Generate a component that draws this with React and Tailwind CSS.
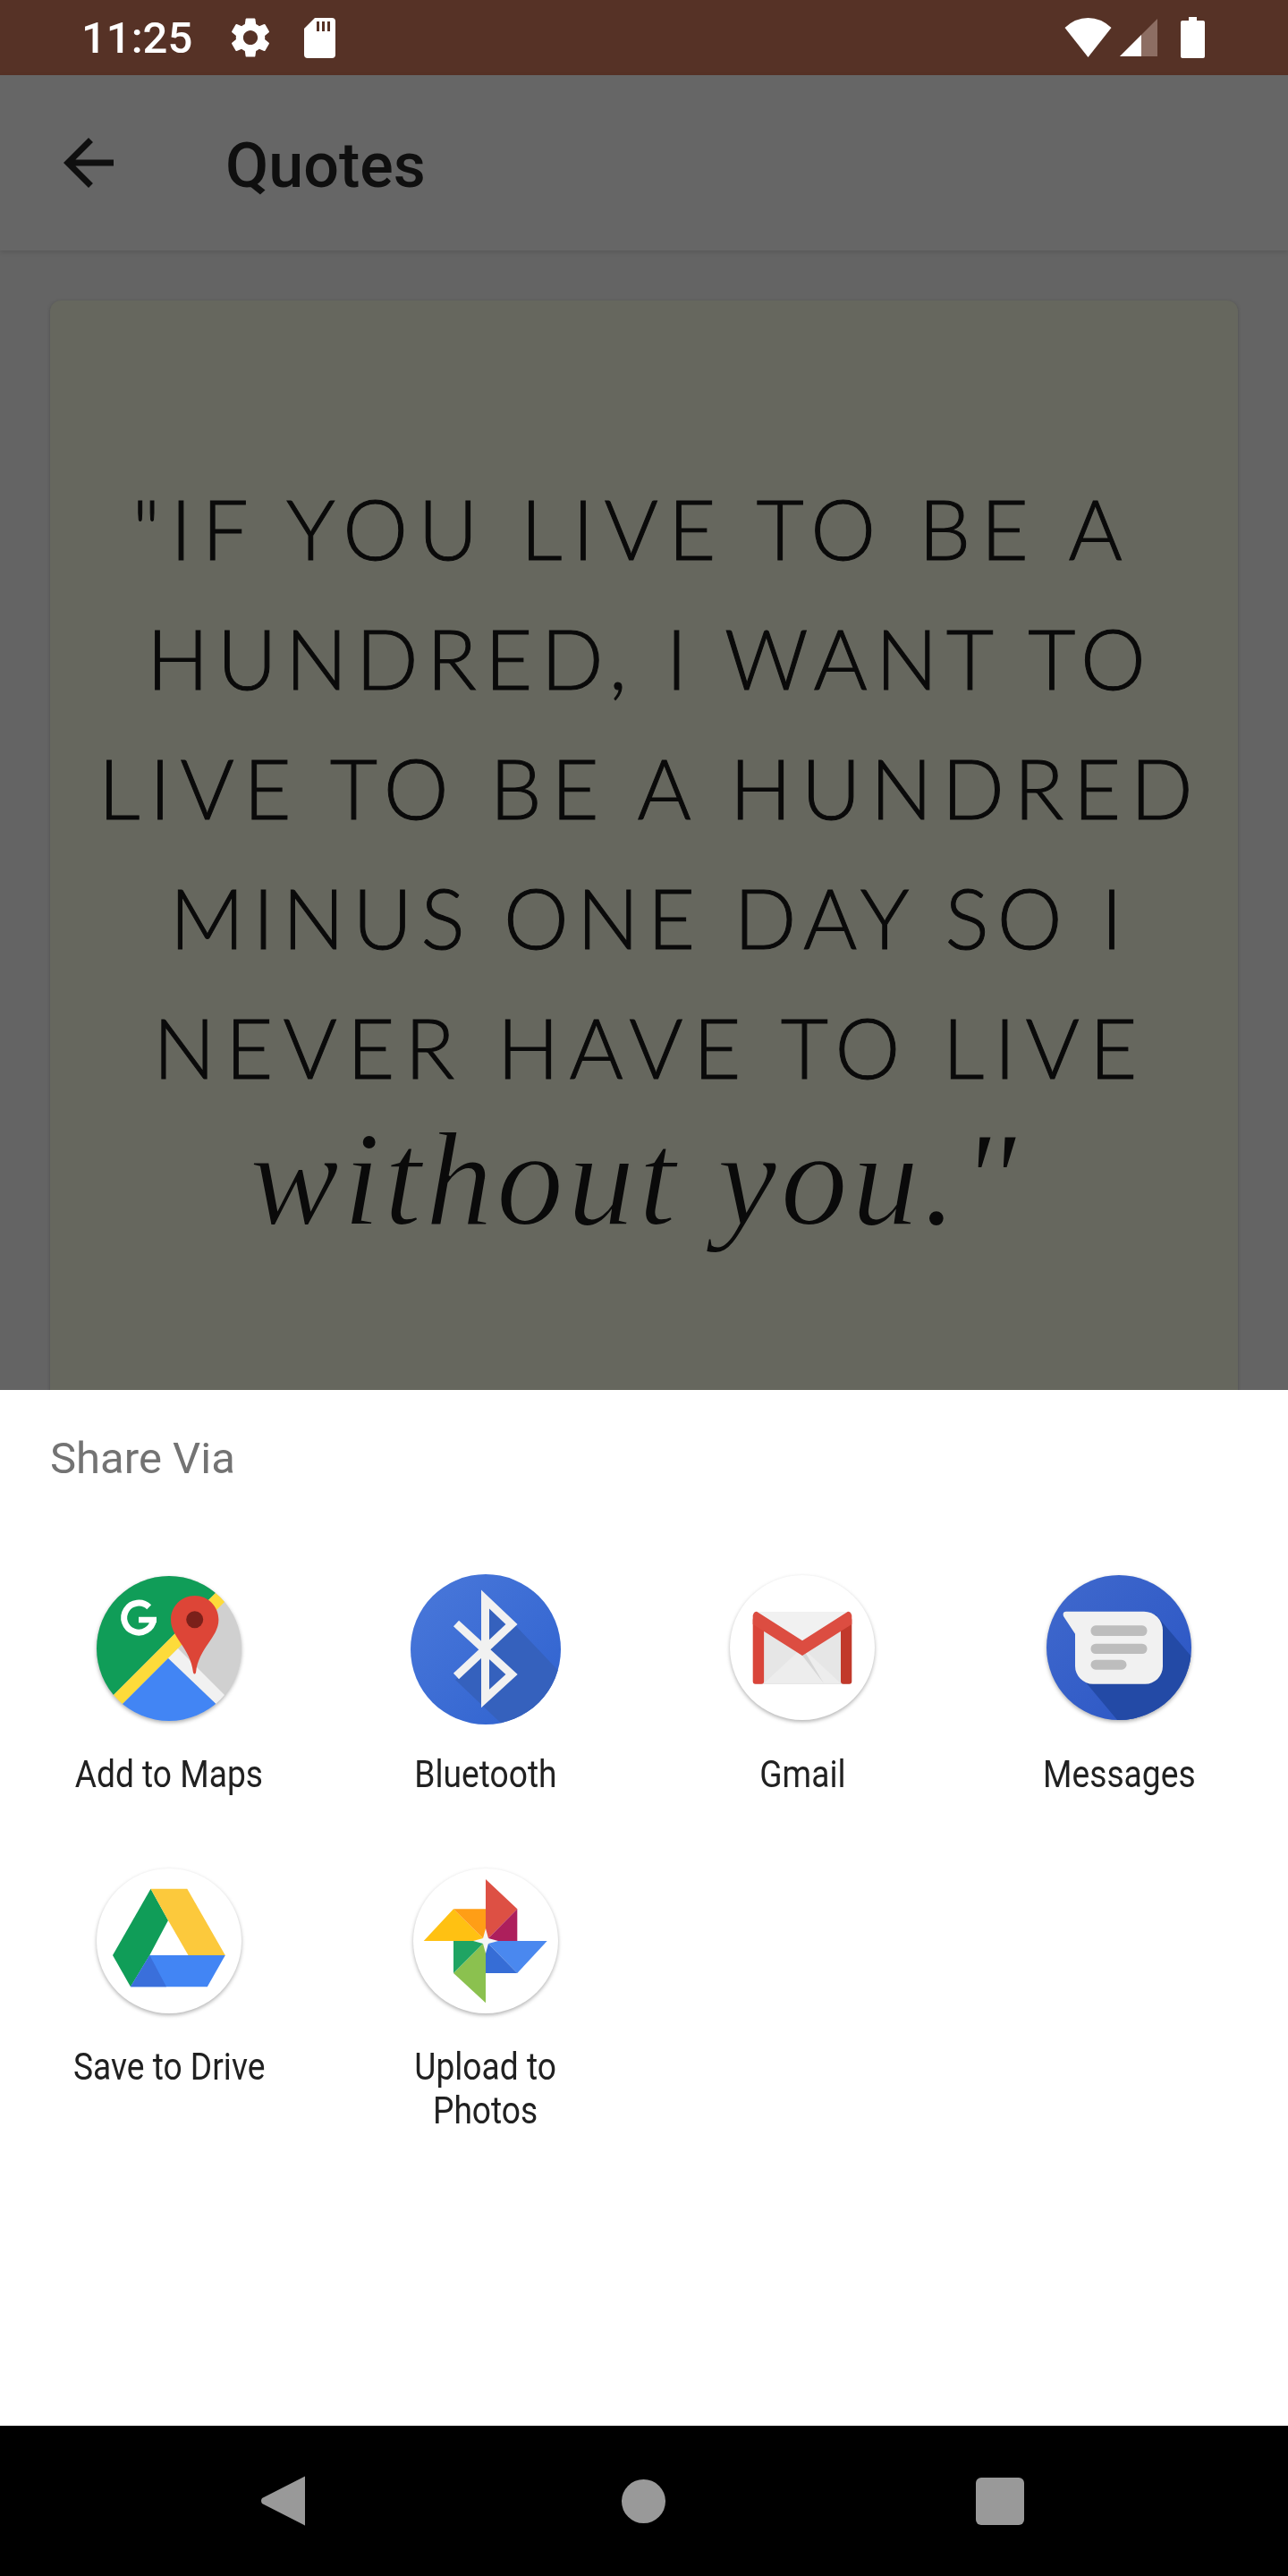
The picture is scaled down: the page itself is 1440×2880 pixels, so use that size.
import React from "react";

const QUOTE_LINES = [
    { text: "\"IF YOU LIVE TO BE A", className: "tracking-[11.4px] -ml-[40px]" },
    { text: "HUNDRED, I WANT TO", className: "tracking-[9.3px]" },
    { text: "LIVE TO BE A HUNDRED", className: "tracking-[10.5px]" },
    { text: "MINUS ONE DAY SO I", className: "tracking-[9.2px]" },
    { text: "NEVER HAVE TO LIVE", className: "tracking-[11.2px]" },
];

const MapsIcon = () => (
    <svg viewBox="0 0 168 168" className="w-[168px] h-[168px] drop-shadow-[0_2px_2px_rgba(0,0,0,0.3)]">
        <defs>
            <clipPath id="maps-clip"><circle cx="84" cy="83" r="81" /></clipPath>
        </defs>
        <g clipPath="url(#maps-clip)">
            <rect width="168" height="168" fill="#d0d0d0" />
            <polygon points="0,0 157,0 0,157" fill="#109d58" />
            <polygon points="157,0 177,0 0,177 0,157" fill="#fddb3a" />
            <polygon points="83,94 94,83 188,177 170,177" fill="#f1f1f1" />
            <polygon points="83,94 0,177 170,177" fill="#4285f4" />
        </g>
        <path d="M61.7 36.8A16.5 16.5 0 1 0 66.5 51" fill="none" stroke="#fff" strokeWidth="7" />
        <path d="M50 51H70" fill="none" stroke="#fff" strokeWidth="6.5" />
        <path d="M112.7 24C98 24 86 36 86 50.7C86 71 108 82 111 110Q112.5 113 114 110C117 82 139.4 71 139.4 50.7C139.4 36 127.4 24 112.7 24Z" fill="#dd4537" />
        <circle cx="112.7" cy="50.7" r="9.5" fill="#7b201a" />
    </svg>
);

const BluetoothIcon = () => (
    <svg viewBox="0 0 168 168" className="w-[168px] h-[168px]">
        <defs>
            <linearGradient id="bt-bg" x1="0" y1="0" x2="1" y2="1">
                <stop offset="0" stopColor="#4a78da" />
                <stop offset="1" stopColor="#2f62cf" />
            </linearGradient>
            <clipPath id="bt-clip"><circle cx="84" cy="84" r="84" /></clipPath>
        </defs>
        <circle cx="84" cy="84" r="84" fill="url(#bt-bg)" />
        <g clipPath="url(#bt-clip)" fill="#3561bd">
            <polygon points="116,56 175,118 175,175 110,175 50,118 84,88" />
            <polygon points="88,38 106,56 88,74" />
        </g>
        <path d="M51 55L113 112L83.5 139V28L113 56L51 114" fill="none" stroke="#f1f1f1" strokeWidth="9" />
    </svg>
);

const GmailIcon = () => (
    <svg viewBox="0 0 168 168" className="w-[168px] h-[168px] drop-shadow-[0_2px_2px_rgba(0,0,0,0.3)]">
        <circle cx="84" cy="82" r="81" fill="#fff" />
        <rect x="29" y="42" width="110" height="81" rx="3" fill="#e6e6e6" />
        <polygon points="33,42 135,42 84,80" fill="#f1f1f1" />
        <polygon points="41,122 84,82 127,122" fill="#ededed" />
        <polygon points="41,60 84,91 108,122 84,82 41,60" fill="#d6d6d6" />
        <rect x="28.7" y="48" width="12.4" height="74.7" rx="3" fill="#d9453a" />
        <rect x="127" y="48" width="12.3" height="74.7" rx="3" fill="#c1392b" />
        <path d="M28.7 46Q30 41.7 33 41.7L84 74.3L135 41.7Q138 41.7 139.3 46V56L84 91L28.7 56Z" fill="#dc4d41" />
    </svg>
);

const MessagesIcon = () => (
    <svg viewBox="0 0 168 168" className="w-[168px] h-[168px] drop-shadow-[0_2px_2px_rgba(0,0,0,0.3)]">
        <defs>
            <linearGradient id="msg-bg" x1="0" y1="0" x2="1" y2="1">
                <stop offset="0" stopColor="#4069cd" />
                <stop offset="1" stopColor="#2a55c4" />
            </linearGradient>
            <clipPath id="msg-clip"><circle cx="84" cy="82" r="81" /></clipPath>
        </defs>
        <circle cx="84" cy="82" r="81" fill="url(#msg-bg)" />
        <polygon clipPath="url(#msg-clip)" points="125,45 170,98 170,170 88,170 42,115" fill="#234aa6" />
        <path d="M25 41.7H112A21 21 0 0 1 133 62.7V103A19.7 19.7 0 0 1 113.3 122.7H55A20 20 0 0 1 35 102.7V66.7L22 47Q20.5 41.7 25 41.7Z" fill="#f1f1f1" />
        <rect x="52.5" y="57.3" width="63" height="11.7" rx="5.5" fill="#bdbdbd" />
        <rect x="52.5" y="77.7" width="63" height="11.3" rx="5.5" fill="#bdbdbd" />
        <rect x="52.5" y="95.7" width="40" height="11" rx="5.5" fill="#bdbdbd" />
    </svg>
);

const DriveIcon = () => (
    <svg viewBox="0 0 168 168" className="w-[168px] h-[168px] drop-shadow-[0_2px_2px_rgba(0,0,0,0.3)]">
        <circle cx="84" cy="83" r="81" fill="#fff" />
        <polygon points="63.5,24.7 21,99 41,134.3 62.3,99 83,60" fill="#109d58" />
        <polygon points="63.5,24.7 104.3,24.7 146.8,99 105.5,99 83,60" fill="#fcc93c" />
        <polygon points="62.3,99 146.8,99 126.8,134.3 41,134.3" fill="#4285f4" />
        <polygon points="62.3,99 81,134.3 41,134.3" fill="#3a6fdb" />
    </svg>
);

const PhotosIcon = () => (
    <svg viewBox="0 0 168 168" className="w-[168px] h-[168px] drop-shadow-[0_2px_2px_rgba(0,0,0,0.3)]">
        <circle cx="84" cy="83" r="81" fill="#fff" />
        <polygon points="84,14 119.3,47.3 84,83" fill="#dd5044" />
        <polygon points="119.3,47.3 119.3,83 84,83" fill="#ad1f5c" />
        <polygon points="84,83 152.7,83 119.3,119" fill="#4a88ef" />
        <polygon points="84,83 119.3,119 84,119" fill="#366dd6" />
        <polygon points="84,152.3 48,119 84,83" fill="#8bc14f" />
        <polygon points="48,83 84,83 48,119" fill="#1fa463" />
        <polygon points="14.7,83 48,47.3 84,83" fill="#ffc112" />
        <polygon points="48,47.3 84,47.3 84,83" fill="#ff9e16" />
        <polygon points="84,69 87,80 98,83 87,86 84,97 81,86 70,83 81,80" fill="#f5f5f5" />
    </svg>
);

const APPS = [
    { label: ["Add to Maps"], Icon: MapsIcon },
    { label: ["Bluetooth"], Icon: BluetoothIcon },
    { label: ["Gmail"], Icon: GmailIcon },
    { label: ["Messages"], Icon: MessagesIcon },
    { label: ["Save to Drive"], Icon: DriveIcon },
    { label: ["Upload to", "Photos"], Icon: PhotosIcon },
];

const StatusBar = () => (
    <div className="flex items-center h-[84px] pl-[91px] pr-[93px] bg-[#563226] text-white">
        <span className="text-[49px] font-medium leading-none">11:25</span>
        <svg viewBox="0 0 24 24" fill="#fff" className="w-[54px] h-[54px] ml-[38px]">
            <path d="M19.14 12.94c.04-.3.06-.61.06-.94 0-.32-.02-.64-.07-.94l2.03-1.58c.18-.14.23-.41.12-.61l-1.92-3.32c-.12-.22-.37-.29-.59-.22l-2.39.96c-.5-.38-1.03-.7-1.62-.94l-.36-2.54c-.04-.24-.24-.41-.48-.41h-3.84c-.24 0-.43.17-.47.41l-.36 2.54c-.59.24-1.13.57-1.62.94l-2.39-.96c-.22-.08-.47 0-.59.22L2.74 8.87c-.12.21-.08.47.12.61l2.03 1.58c-.05.3-.09.63-.09.94s.02.64.07.94l-2.03 1.58c-.18.14-.23.41-.12.61l1.92 3.32c.12.22.37.29.59.22l2.39-.96c.5.38 1.03.7 1.62.94l.36 2.54c.05.24.24.41.48.41h3.84c.24 0 .44-.17.47-.41l.36-2.54c.59-.24 1.13-.56 1.62-.94l2.39.96c.22.08.47 0 .59-.22l1.92-3.32c.12-.22.07-.47-.12-.61l-2.01-1.58zM12 15.6c-1.98 0-3.6-1.62-3.6-3.6s1.62-3.6 3.6-3.6 3.6 1.62 3.6 3.6-1.62 3.6-3.6 3.6z" />
        </svg>
        <svg viewBox="0 0 35 45" className="w-[35px] h-[45px] ml-[33px]">
            <path d="M12 0H31Q35 0 35 4V41Q35 45 31 45H4Q0 45 0 41V12Z" fill="#fff" />
            <path d="M14 4h3v11h-3zM20 4h3v11h-3zM26 4h3v11h-3z" fill="#563226" />
        </svg>
        <div className="flex items-center ml-auto">
            <svg viewBox="0 0 53 44" className="w-[53px] h-[44px]">
                <path d="M26.5 44L0.5 11Q12 0 26.5 0T52.5 11Z" fill="#fff" />
            </svg>
            <svg viewBox="0 0 42 42" className="w-[42px] h-[42px] ml-[9px]">
                <path d="M42 0V42H0Z" fill="#8d6e63" />
                <path d="M24 18V42H0Z" fill="#fff" />
            </svg>
            <svg viewBox="0 0 27 46" className="w-[27px] h-[46px] ml-[26px]">
                <path d="M9 0H18V4H25Q27 4 27 6V44Q27 46 25 46H2Q0 46 0 44V6Q0 4 2 4H9Z" fill="#fff" />
            </svg>
        </div>
    </div>
);

const AppBar = () => (
    <div className="relative z-10 flex items-center h-[196px] pl-[57px] bg-[#666666] text-[#0f0f0f] shadow-[0_2px_5px_rgba(0,0,0,0.12)]">
        <svg viewBox="0 0 24 24" fill="#0f0f0f" className="w-[84px] h-[84px]">
            <path d="M20 11H7.83l5.59-5.59L12 4l-8 8 8 8 1.41-1.41L7.83 13H20v-2z" />
        </svg>
        <span className="ml-[111px] mt-[6px] text-[70px] font-medium leading-none">Quotes</span>
    </div>
);

const QuoteCard = () => (
    <div className="flex-1 min-h-0 overflow-hidden bg-[#646464] px-[56px] pt-[56px]">
        <div className="h-[1400px] rounded-t-[12px] bg-[#66675e] pt-[182px] pl-[14px] text-center text-[#0a0a0a] shadow-[0_1px_4px_rgba(0,0,0,0.2)]">
            {QUOTE_LINES.map((line) => (
                <div
                    key={line.text}
                    className={`whitespace-nowrap text-[92px] leading-[145px] font-light font-['Lato',sans-serif] [-webkit-text-stroke:1px_#0a0a0a] ${line.className}`}
                >
                    {line.text}
                </div>
            ))}
            <div className="whitespace-nowrap -ml-[34px] text-[150px] leading-[150px] italic tracking-[4.4px] font-['Liberation_Serif',serif] [-webkit-text-stroke:2px_#66675e]">
                without you."
            </div>
        </div>
    </div>
);

const ShareSheet = () => (
    <div className="h-[1158px] bg-white pt-[49px]">
        <div className="pl-[56px] text-[49px] leading-[56px] text-[#737373]">Share Via</div>
        <div className="grid grid-cols-4 gap-y-[79px] mt-[101px] px-[12px]">
            {APPS.map(({ label, Icon }) => (
                <div key={label[0]} className="flex flex-col items-center">
                    <Icon />
                    <div className="mt-[31px] text-center text-[42px] leading-[49px] text-[#212121] scale-x-[0.885]">
                        {label.map((part) => (
                            <div key={part} className="whitespace-nowrap">{part}</div>
                        ))}
                    </div>
                </div>
            ))}
        </div>
    </div>
);

const NavBar = () => (
    <div className="flex items-center h-[168px] bg-black pl-[292px]">
        <svg viewBox="0 0 49 56" className="w-[49px] h-[56px]">
            <path d="M49 1V55Q49 56 48 55L1 31Q-1 28 1 25L48 1Q49 0 49 1Z" fill="#999999" />
        </svg>
        <div className="w-[49px] h-[49px] ml-[354px] rounded-full bg-[#999999]" />
        <div className="w-[54px] h-[53px] ml-[347px] rounded-[6px] bg-[#999999]" />
    </div>
);

const App = () => {
    return (
        <div className="flex flex-col w-[1440px] h-[2880px] overflow-hidden font-['Roboto',sans-serif]">
            <StatusBar />
            <AppBar />
            <QuoteCard />
            <ShareSheet />
            <NavBar />
        </div>
    );
};

export default App;
